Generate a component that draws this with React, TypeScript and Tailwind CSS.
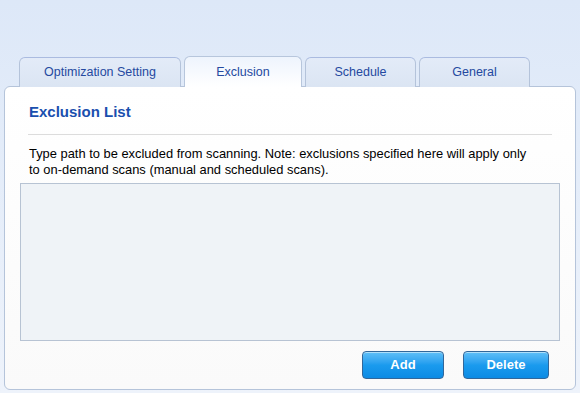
import React, { useState } from "react";

const TABS = ["Optimization Setting", "Exclusion", "Schedule", "General"];
const TAB_WIDTHS = ["w-[162px]", "w-[118px]", "w-[111px]", "w-[111px]"];

export default function App() {
  const [active, setActive] = useState(1);

  return (
    <div
      className="w-[580px] h-[393px] overflow-hidden bg-gradient-to-b from-[#dde8f8] to-[#eef3fb] text-[12px]"
      style={{ fontFamily: '"Liberation Sans", Arial, sans-serif' }}
    >
      {/* Tabs */}
      <div className="flex gap-[3px] pl-[19px] pt-[56px] relative z-10">
        {TABS.map((tab, i) => (
          <button
            key={tab}
            onClick={() => setActive(i)}
            className={`${TAB_WIDTHS[i]} rounded-t-[6px] border border-b-0 flex items-center justify-center text-[12.5px] font-normal text-[#2549a0] ${
              active === i
                ? "bg-gradient-to-b from-[#eef4fd] to-white border-[#b7c6dc] h-[31px]"
                : "bg-gradient-to-b from-[#e3ebf8] to-[#dbe5f3] border-[#b4c3da] h-[30px] mt-px border-t-[#aabbe0]"
            }`}
          >
            {tab}
          </button>
        ))}
      </div>

      {/* Panel */}
      <div className="mx-[4px] -mt-px h-[304px] rounded-[6px] border border-[#b5c4da] bg-gradient-to-b from-white to-[#fafafa] flex flex-col">
        <div className="pl-[23px] pr-[23px] pt-[16px]">
          <h2 className="text-[15px] leading-[18px] font-bold text-[#1a4fae] pl-px">Exclusion List</h2>
          <div className="mt-[13px] h-px bg-[#dcdcdc]" />
        </div>

        <p className="mt-[11px] px-[24px] text-[12.9px] leading-[16px] text-black">
          Type path to be excluded from scanning. Note: exclusions specified here will apply only
          <br />
          to on-demand scans (manual and scheduled scans).
        </p>

        <div className="mt-[5px] mx-[15px] h-[158px] border border-[#b7c3d3] bg-[#eff3f7]" />

        <div className="flex justify-end gap-[19px] pr-[26px] mt-[10px]">
          <button className="w-[82px] h-[28px] rounded-[4px] border border-[#32679a] bg-gradient-to-b from-[#5ec0f8] via-[#1a9bee] to-[#0c8be4] text-white font-bold text-[13px] shadow-[inset_0_1px_0_rgba(255,255,255,0.5)]">
            Add
          </button>
          <button className="w-[86px] h-[28px] rounded-[4px] border border-[#32679a] bg-gradient-to-b from-[#5ec0f8] via-[#1a9bee] to-[#0c8be4] text-white font-bold text-[13px] shadow-[inset_0_1px_0_rgba(255,255,255,0.5)]">
            Delete
          </button>
        </div>
      </div>
    </div>
  );
}
